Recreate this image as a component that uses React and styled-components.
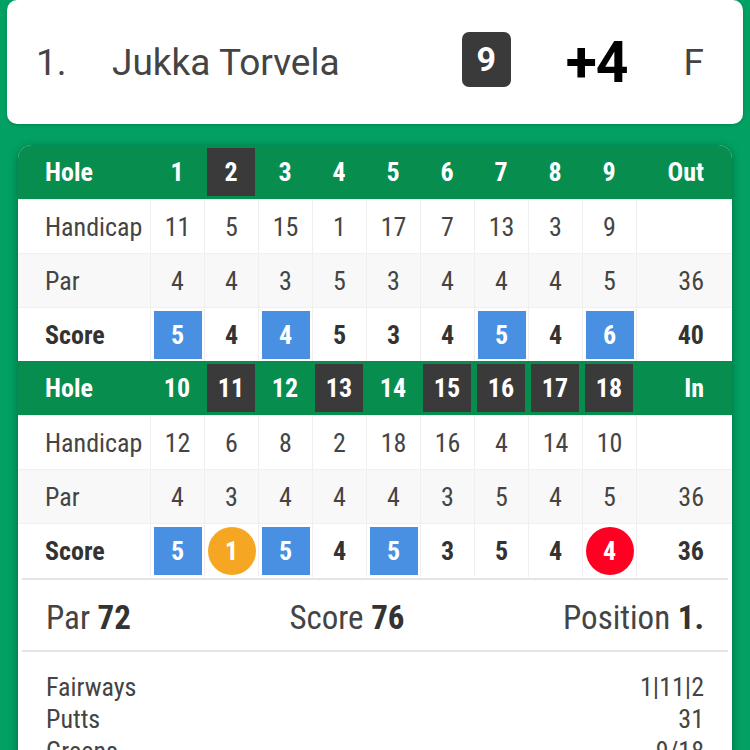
import React from "react";
import styled, { createGlobalStyle } from "styled-components";

const Global = createGlobalStyle`
  html, body { margin: 0; padding: 0; }
  body {
    background: #02a062;
    font-family: Roboto, "Liberation Sans", sans-serif;
    color: #444;
  }
`;

const condensed = `"Roboto Condensed", Roboto, "Liberation Sans", sans-serif`;

const Page = styled.div`
  display: flex;
  flex-direction: column;
  gap: 21px;
`;

const PlayerCard = styled.div`
  margin: 0 7px;
  height: 124px;
  background: #fff;
  border-radius: 10px;
  box-shadow: 0 1px 3px rgba(0, 0, 0, 0.2);
  display: flex;
  align-items: center;
  padding: 0 39px 0 29px;
  box-sizing: border-box;
  font-size: 37px;
  color: #444;
`;

const Rank = styled.span`
  width: 76px;
`;

const Name = styled.span`
  flex: 1;
`;

const HoleBadge = styled.div`
  width: 49px;
  height: 55px;
  border-radius: 7px;
  background: #3a3a3a;
  color: #fff;
  font-weight: 700;
  font-size: 34px;
  display: flex;
  align-items: center;
  justify-content: center;
  margin-top: -6px;
`;

const ToPar = styled.span`
  margin-left: 55px;
  font-size: 57px;
  font-weight: 700;
  color: #000;
  letter-spacing: -1px;
`;

const Status = styled.span`
  margin-left: 56px;
`;

const ScoreCard = styled.div`
  margin: 0 18px;
  background: #fff;
  border-radius: 14px 14px 0 0;
  overflow: hidden;
  box-shadow: 0 2px 8px rgba(0, 0, 0, 0.35);
  min-height: 700px;
  font-family: ${condensed};
`;

const Row = styled.div`
  display: grid;
  grid-template-columns: 132px repeat(9, 54px) 1fr;
  height: 54px;
  background: ${(p) => (p.$head ? "#078d4e" : p.$shade ? "#f8f8f8" : "#fff")};
  color: ${(p) => (p.$head ? "#fff" : "#444")};
  font-weight: ${(p) => (p.$bold ? 700 : 400)};
  font-size: 26px;
  border-top: ${(p) => (p.$head ? "none" : "1px solid #f0f0f0")};
  box-sizing: border-box;
`;

const LabelCell = styled.div`
  display: flex;
  align-items: center;
  padding-left: 27px;
  color: ${(p) => (p.$head ? "#fff" : p.$bold ? "#333" : "#444")};
`;

const Cell = styled.div`
  display: flex;
  align-items: center;
  justify-content: center;
  border-left: ${(p) => (p.$head ? "none" : "1px solid #efefef")};
  color: ${(p) => (p.$head ? "#fff" : p.$bold ? "#333" : "#444")};
`;

const TotalCell = styled(Cell)`
  justify-content: flex-end;
  padding-right: 28px;
`;

const Mark = styled.div`
  width: 48px;
  height: 48px;
  display: flex;
  align-items: center;
  justify-content: center;
  background: ${(p) => p.$bg};
  border-radius: ${(p) => (p.$round ? "50%" : "0")};
  color: #fff;
`;

const Summary = styled.div`
  margin: 1px 4px 0 4px;
  border-top: 2px solid #e4e4e4;
  border-bottom: 2px solid #e4e4e4;
  height: 74px;
  box-sizing: border-box;
  display: flex;
  align-items: center;
  justify-content: space-between;
  padding: 4px 24px 0 24px;
  font-size: 33px;
  color: #444;
  b { color: #333; }
`;

const Stats = styled.div`
  padding: 19px 28px 0 28px;
  font-size: 26px;
  line-height: 32px;
  color: #444;
`;

const StatRow = styled.div`
  display: flex;
  justify-content: space-between;
`;

const front = {
  label: "Out",
  holes: [1, 2, 3, 4, 5, 6, 7, 8, 9],
  hcp: [11, 5, 15, 1, 17, 7, 13, 3, 9],
  par: [4, 4, 3, 5, 3, 4, 4, 4, 5],
  score: [5, 4, 4, 5, 3, 4, 5, 4, 6],
  marked: [2],
  parTotal: 36,
  scoreTotal: 40,
};

const back = {
  label: "In",
  holes: [10, 11, 12, 13, 14, 15, 16, 17, 18],
  hcp: [12, 6, 8, 2, 18, 16, 4, 14, 10],
  par: [4, 3, 4, 4, 4, 3, 5, 4, 5],
  score: [5, 1, 5, 4, 5, 3, 5, 4, 4],
  marked: [11, 13, 15, 16, 17, 18],
  parTotal: 36,
  scoreTotal: 36,
};

function scoreMark(score, par) {
  const d = score - par;
  if (d === 1) return { bg: "#4a90e2", round: false };
  if (d === -1) return { bg: "#ff0022", round: true };
  if (d <= -2) return { bg: "#f5a623", round: true };
  if (d >= 2) return { bg: "#1f5fb0", round: false };
  return null;
}

function Nine({ data }) {
  return (
    <>
      <Row $head $bold>
        <LabelCell $head>Hole</LabelCell>
        {data.holes.map((h) => (
          <Cell $head key={h}>
            {data.marked.includes(h) ? (
              <Mark $bg="#3a3a3a">{h}</Mark>
            ) : (
              h
            )}
          </Cell>
        ))}
        <TotalCell $head>{data.label}</TotalCell>
      </Row>
      <Row>
        <LabelCell>Handicap</LabelCell>
        {data.hcp.map((v, i) => (
          <Cell key={i}>{v}</Cell>
        ))}
        <TotalCell />
      </Row>
      <Row $shade>
        <LabelCell>Par</LabelCell>
        {data.par.map((v, i) => (
          <Cell key={i}>{v}</Cell>
        ))}
        <TotalCell>{data.parTotal}</TotalCell>
      </Row>
      <Row $bold>
        <LabelCell $bold>Score</LabelCell>
        {data.score.map((v, i) => {
          const m = scoreMark(v, data.par[i]);
          return (
            <Cell $bold key={i}>
              {m ? (
                <Mark $bg={m.bg} $round={m.round}>
                  {v}
                </Mark>
              ) : (
                v
              )}
            </Cell>
          );
        })}
        <TotalCell $bold>{data.scoreTotal}</TotalCell>
      </Row>
    </>
  );
}

export default function App() {
  return (
    <>
      <Global />
      <Page>
        <PlayerCard>
          <Rank>1.</Rank>
          <Name>Jukka Torvela</Name>
          <HoleBadge>9</HoleBadge>
          <ToPar>+4</ToPar>
          <Status>F</Status>
        </PlayerCard>
        <ScoreCard>
          <Nine data={front} />
          <Nine data={back} />
          <Summary>
            <span>
              Par <b>72</b>
            </span>
            <span>
              Score <b>76</b>
            </span>
            <span>
              Position <b>1.</b>
            </span>
          </Summary>
          <Stats>
            <StatRow>
              <span>Fairways</span>
              <span>1|11|2</span>
            </StatRow>
            <StatRow>
              <span>Putts</span>
              <span>31</span>
            </StatRow>
            <StatRow>
              <span>Greens</span>
              <span>9/18</span>
            </StatRow>
          </Stats>
        </ScoreCard>
      </Page>
    </>
  );
}
